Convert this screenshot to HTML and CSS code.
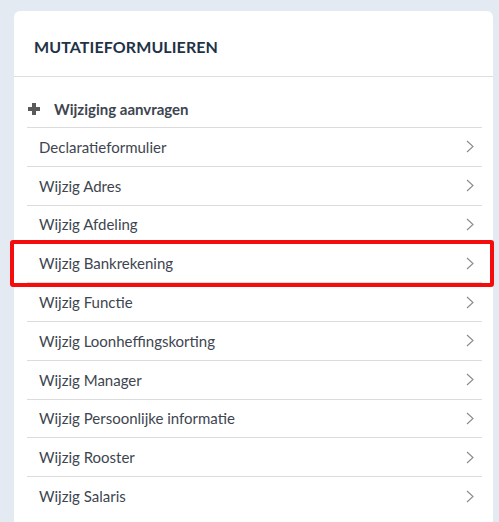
FILE: index.html
```html
<!DOCTYPE html>
<html lang="nl">
<head>
<meta charset="utf-8">
<title>Mutatieformulieren</title>
<link rel="stylesheet" href="styles.css">
</head>
<body>
<div class="card">
  <div class="card-header"><h2 class="title">MUTATIEFORMULIEREN</h2></div>
  <ul class="list">
    <li class="row row-add">
      <svg class="plus" width="12" height="12" viewBox="0 0 12 12"><path d="M4 0h4v4h4v4H8v4H4V8H0V4h4z" fill="#5a5a5a"/></svg>
      <span class="add-label">Wijziging aanvragen</span>
    </li>
    <li class="row"><span>Declaratieformulier</span><svg class="chev" width="8" height="13" viewBox="0 0 8 13"><path d="M1 1l6 5.5L1 12" fill="none" stroke="#8a8a8a" stroke-width="1.1"/></svg></li>
    <li class="row"><span>Wijzig Adres</span><svg class="chev" width="8" height="13" viewBox="0 0 8 13"><path d="M1 1l6 5.5L1 12" fill="none" stroke="#8a8a8a" stroke-width="1.1"/></svg></li>
    <li class="row"><span>Wijzig Afdeling</span><svg class="chev" width="8" height="13" viewBox="0 0 8 13"><path d="M1 1l6 5.5L1 12" fill="none" stroke="#8a8a8a" stroke-width="1.1"/></svg></li>
    <li class="row row-marked"><span>Wijzig Bankrekening</span><svg class="chev" width="8" height="13" viewBox="0 0 8 13"><path d="M1 1l6 5.5L1 12" fill="none" stroke="#8a8a8a" stroke-width="1.1"/></svg><div class="highlight"></div></li>
    <li class="row"><span>Wijzig Functie</span><svg class="chev" width="8" height="13" viewBox="0 0 8 13"><path d="M1 1l6 5.5L1 12" fill="none" stroke="#8a8a8a" stroke-width="1.1"/></svg></li>
    <li class="row"><span>Wijzig Loonheffingskorting</span><svg class="chev" width="8" height="13" viewBox="0 0 8 13"><path d="M1 1l6 5.5L1 12" fill="none" stroke="#8a8a8a" stroke-width="1.1"/></svg></li>
    <li class="row"><span>Wijzig Manager</span><svg class="chev" width="8" height="13" viewBox="0 0 8 13"><path d="M1 1l6 5.5L1 12" fill="none" stroke="#8a8a8a" stroke-width="1.1"/></svg></li>
    <li class="row"><span>Wijzig Persoonlijke informatie</span><svg class="chev" width="8" height="13" viewBox="0 0 8 13"><path d="M1 1l6 5.5L1 12" fill="none" stroke="#8a8a8a" stroke-width="1.1"/></svg></li>
    <li class="row"><span>Wijzig Rooster</span><svg class="chev" width="8" height="13" viewBox="0 0 8 13"><path d="M1 1l6 5.5L1 12" fill="none" stroke="#8a8a8a" stroke-width="1.1"/></svg></li>
    <li class="row"><span>Wijzig Salaris</span><svg class="chev" width="8" height="13" viewBox="0 0 8 13"><path d="M1 1l6 5.5L1 12" fill="none" stroke="#8a8a8a" stroke-width="1.1"/></svg></li>
  </ul>
</div>
</body>
</html>
```
FILE: styles.css
```css
html, body {
  margin: 0;
  padding: 0;
  background: #e4eaf2;
  height: 100%;
  overflow: hidden;
}
body {
  padding: 11px 6px 0 14px;
  font-family: "Lato", "Liberation Sans", sans-serif;
  color: #3e4550;
}
.card {
  background: #fff;
  border-radius: 6px 6px 0 0;
  min-height: 560px;
}
.card-header {
  border-bottom: 1px solid #dedede;
  display: flex;
  align-items: center;
  padding: 0 20px;
  box-sizing: border-box;
  height: 66px;
}
.title {
  margin: 6px 0 0;
  font-size: 16px;
  font-weight: 700;
  color: #1f3246;
  letter-spacing: 0.1px;
}
.list {
  list-style: none;
  margin: 0 11px 0 13px;
  padding: 0;
}
.row {
  position: relative;
  display: flex;
  align-items: center;
  justify-content: space-between;
  height: 38.8px;
  box-sizing: border-box;
  border-top: 1px solid #dcdcdc;
  padding: 0 8px 0 12px;
  font-size: 15px;
}
.row-add {
  border-top: none;
  height: 50px;
  justify-content: flex-start;
  padding: 13px 0 0 1px;
  gap: 14px;
}
.add-label {
  font-weight: 700;
  color: #3e4550;
}
.chev {
  display: block;
}
.highlight {
  position: absolute;
  left: -17px;
  right: -12px;
  top: -4px;
  bottom: -5px;
  border: 4px solid #f50d0d;
  border-radius: 3px;
  pointer-events: none;
}
```
